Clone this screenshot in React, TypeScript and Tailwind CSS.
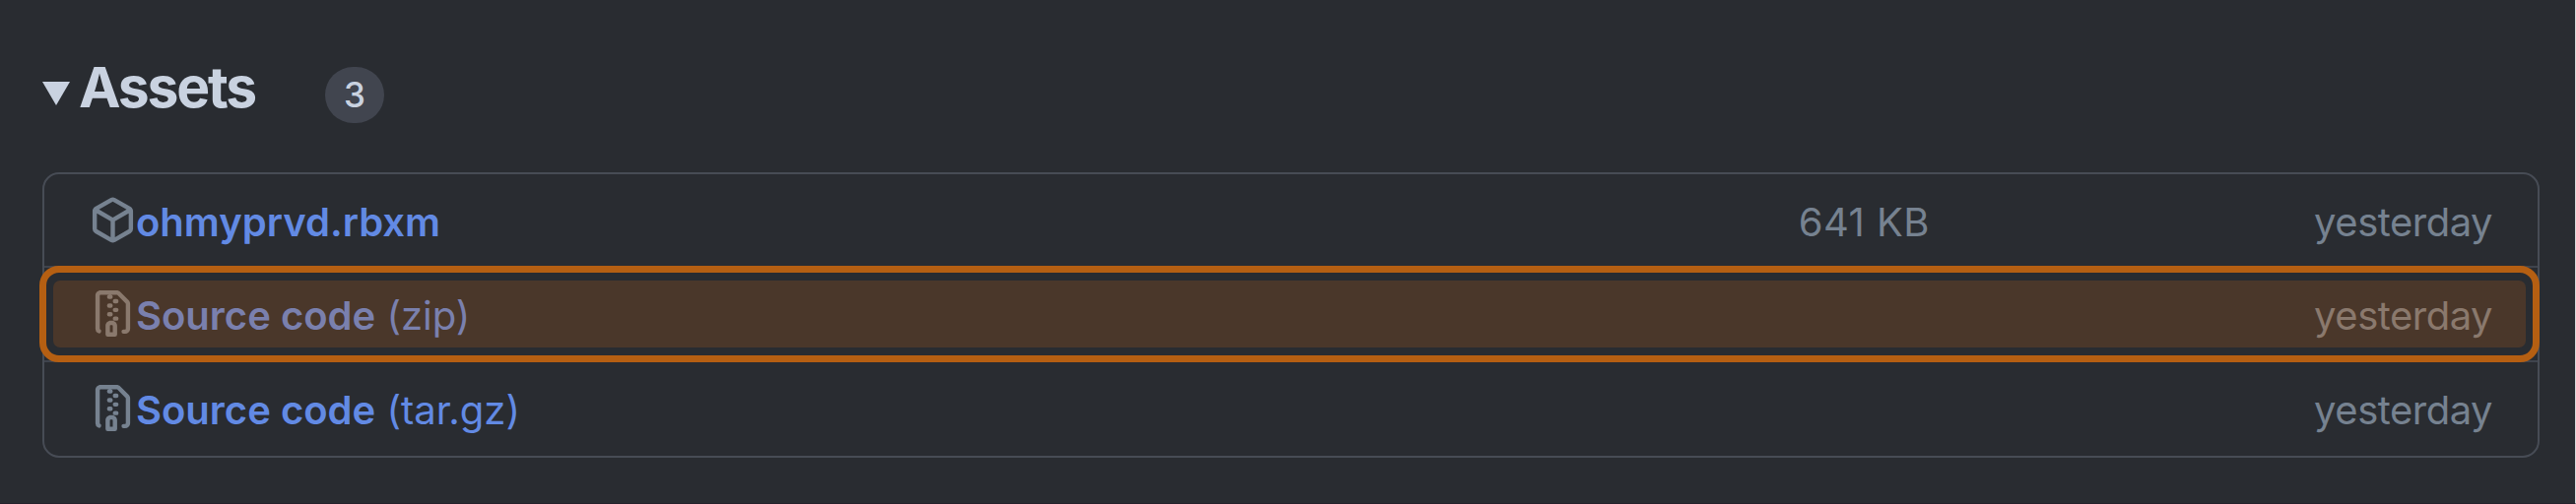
import type { ReactNode } from "react";

function PackageIcon({ className }: { className: string }) {
  return (
    <svg viewBox="0 0 16 16" fill="currentColor" className={className}>
      <path d="m8.878.392 5.25 3.045c.54.314.872.89.872 1.514v6.098a1.75 1.75 0 0 1-.872 1.514l-5.25 3.045a1.75 1.75 0 0 1-1.756 0l-5.25-3.045A1.75 1.75 0 0 1 1 11.049V4.951c0-.624.332-1.201.872-1.514L7.122.392a1.75 1.75 0 0 1 1.756 0ZM7.875 1.69l-4.63 2.685L8 7.133l4.755-2.758-4.63-2.685a.248.248 0 0 0-.25 0ZM2.5 5.677v5.372c0 .09.047.171.125.216l4.625 2.683V8.432Zm6.25 8.271 4.625-2.683a.25.25 0 0 0 .125-.216V5.677L8.75 8.432Z" />
    </svg>
  );
}

function FileZipIcon({ className }: { className: string }) {
  return (
    <svg viewBox="0 0 16 16" fill="currentColor" className={className}>
      <path d="M3.5 1.75v11.5c0 .09.048.173.126.217a.75.75 0 0 1-.752 1.298A1.748 1.748 0 0 1 2 13.25V1.75C2 .784 2.784 0 3.75 0h5.586c.464 0 .909.185 1.237.513l2.914 2.914c.329.328.513.773.513 1.237v8.586A1.75 1.75 0 0 1 12.25 15h-.5a.75.75 0 0 1 0-1.5h.5a.25.25 0 0 0 .25-.25V4.664a.25.25 0 0 0-.073-.177L9.513 1.573a.25.25 0 0 0-.177-.073H7.25a.75.75 0 0 1 0 1.5h-.5a.75.75 0 0 1 0-1.5h-3a.25.25 0 0 0-.25.25Zm3.75 8.75h.5c.966 0 1.75.784 1.75 1.75v3a.75.75 0 0 1-.75.75h-2.5a.75.75 0 0 1-.75-.75v-3c0-.966.784-1.75 1.75-1.75ZM6 5.25a.75.75 0 0 1 .75-.75h.5a.75.75 0 0 1 0 1.5h-.5A.75.75 0 0 1 6 5.25Zm.75 2.25h.5a.75.75 0 0 1 0 1.5h-.5a.75.75 0 0 1 0-1.5ZM8 6.75A.75.75 0 0 1 8.75 6h.5a.75.75 0 0 1 0 1.5h-.5A.75.75 0 0 1 8 6.75ZM8.75 3h.5a.75.75 0 0 1 0 1.5h-.5a.75.75 0 0 1 0-1.5ZM8 9.75A.75.75 0 0 1 8.75 9h.5a.75.75 0 0 1 0 1.5h-.5A.75.75 0 0 1 8 9.75Zm-1 2.5v2.25h1v-2.25a.25.25 0 0 0-.25-.25h-.5a.25.25 0 0 0-.25.25Z" />
    </svg>
  );
}

type RowProps = {
  icon: ReactNode;
  name: string;
  suffix?: string;
  size?: string;
  highlighted?: boolean;
  className: string;
};

function AssetRow({ icon, name, suffix, size, highlighted, className }: RowProps) {
  return (
    <li className={`relative ${className}`}>
      {highlighted && (
        <div className="absolute -top-[2px] -right-[2px] bottom-[-2px] -left-[5px] rounded-[20px] border-[7px] border-[#b55f12] bg-[#292c31] px-[7px] pt-2 pb-2">
          <div className="h-full rounded-[7px] bg-[#4a372a]" />
        </div>
      )}
      <div
        className={`relative flex h-full items-center pr-[46px] pl-[46px] ${
          highlighted ? "text-[#8a796d]" : "text-[#768290]"
        }`}
      >
        {icon}
        <a className={`pt-[4px] leading-[60px] whitespace-pre ${highlighted ? "text-[#7a80ae]" : "text-[#628ae4]"}`}>
          <span className="font-semibold">{name}</span>
          {suffix && <span> {suffix}</span>}
        </a>
        <span className="ml-auto w-[150px] pt-[4px] text-right leading-[60px] tracking-[0.45px]">{size}</span>
        <span className="w-[571px] pt-[4px] text-right leading-[60px] tracking-[-0.5px]">yesterday</span>
      </div>
    </li>
  );
}

export default function App() {
  return (
    <main className="h-[512px] w-[2615px] overflow-hidden border-r border-b border-r-[#d9dadb] border-b-[#25212b] bg-[#292c31] pt-[54px] pr-[36px] pl-[43px] font-['Inter',sans-serif] text-[40px]">
      <header className="flex h-[84px] items-start text-[#c9d2e0]">
        <svg viewBox="0 0 28 24" fill="currentColor" className="mt-[29px] h-6 w-7">
          <path d="M0 0H28L14 24Z" />
        </svg>
        <h3 className="ml-[9px] w-[181px] text-[57px] leading-[70px] font-bold tracking-[-2.2px]">Assets</h3>
        <span className="mt-[14px] ml-[69px] flex h-[57px] w-[60px] items-center justify-center rounded-full bg-[#41454f] text-[35px] leading-none font-medium">
          3
        </span>
      </header>
      <ul className="mt-[37px] rounded-[17px] border-2 border-[#474c55]">
        <AssetRow
          className="h-[95px] border-b-2 border-[#3f444d]"
          icon={<PackageIcon className="h-[47px] w-[47px]" />}
          name="ohmyprvd.rbxm"
          size="641 KB"
        />
        <AssetRow
          className="h-[96px] border-b-2 border-[#3f444d]"
          icon={<FileZipIcon className="-mt-px h-[47px] w-[47px]" />}
          name="Source code"
          suffix="(zip)"
          highlighted
        />
        <AssetRow
          className="h-[95px] pb-[2px]"
          icon={<FileZipIcon className="-mt-px h-[47px] w-[47px]" />}
          name="Source code"
          suffix="(tar.gz)"
        />
      </ul>
    </main>
  );
}
